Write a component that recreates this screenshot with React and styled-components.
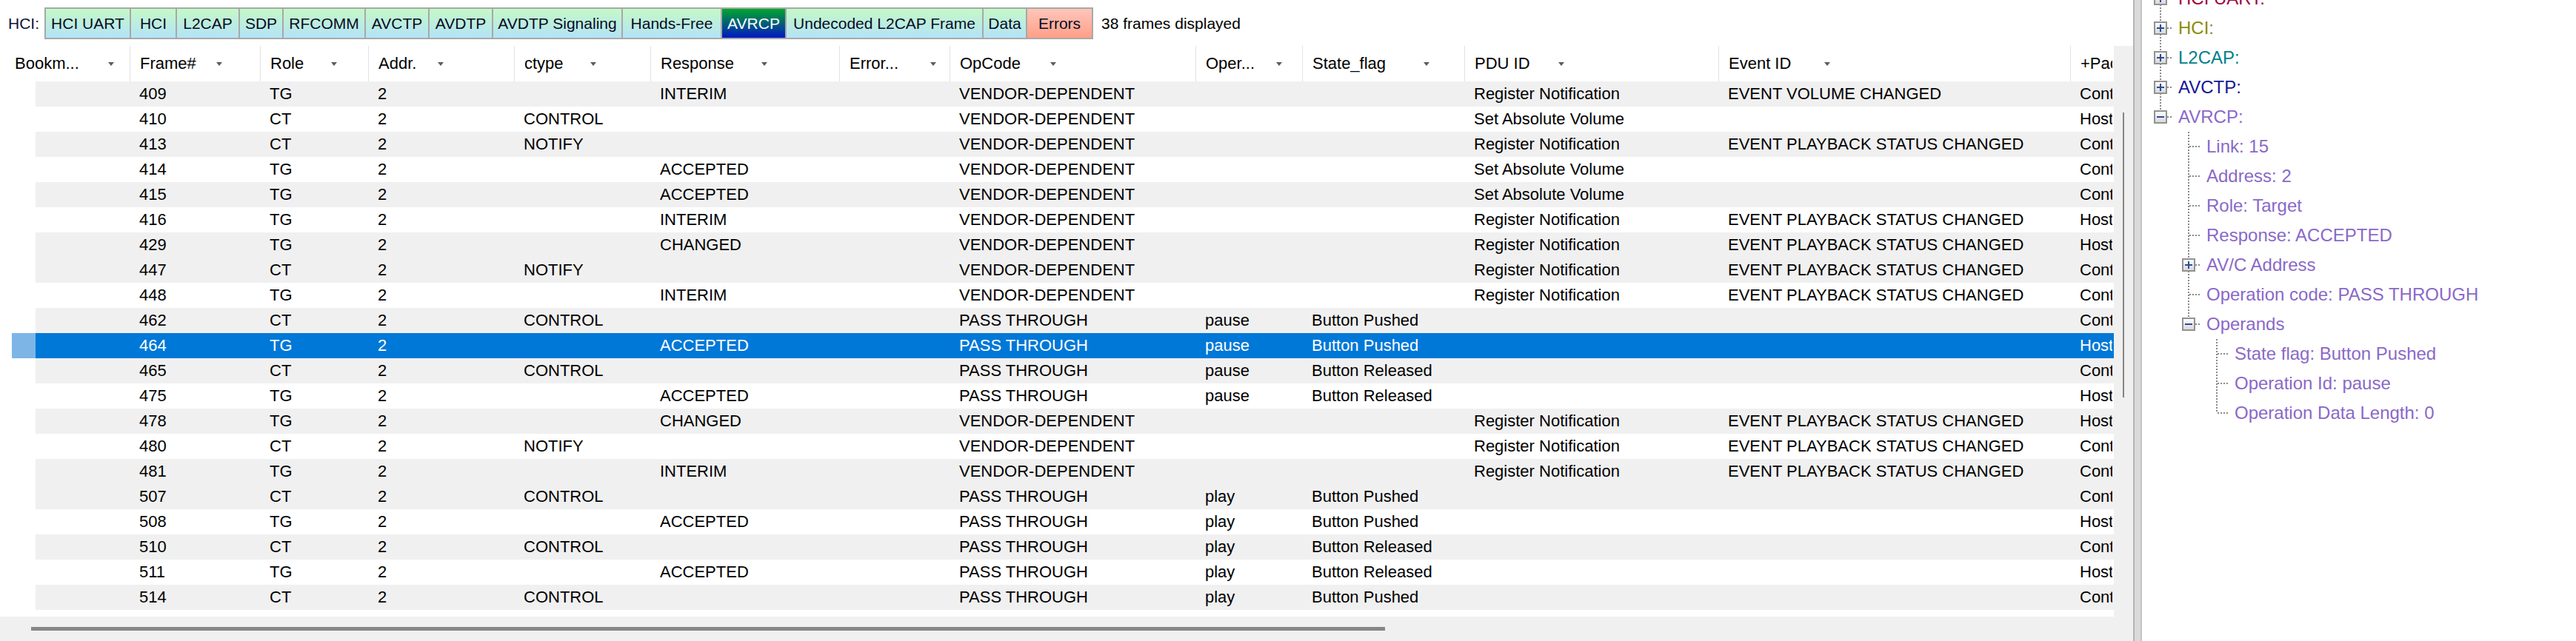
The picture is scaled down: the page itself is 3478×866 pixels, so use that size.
import React from 'react';
import styled, { createGlobalStyle } from 'styled-components';

const GlobalStyle = createGlobalStyle`
  html, body {
    margin: 0;
    padding: 0;
    background: #fff;
  }
  body {
    width: 3478px;
    height: 866px;
    overflow: hidden;
    font-family: "Liberation Sans", Arial, sans-serif;
  }
`;

const TABS = [
  { label: 'HCI UART', width: 115 },
  { label: 'HCI', width: 62 },
  { label: 'L2CAP', width: 85 },
  { label: 'SDP', width: 59 },
  { label: 'RFCOMM', width: 111 },
  { label: 'AVCTP', width: 86 },
  { label: 'AVDTP', width: 86 },
  { label: 'AVDTP Signaling', width: 175 },
  { label: 'Hands-Free', width: 134 },
  { label: 'AVRCP', width: 87, kind: 'active' },
  { label: 'Undecoded L2CAP Frame', width: 266 },
  { label: 'Data', width: 59 },
  { label: 'Errors', width: 89, kind: 'error' },
];

const COLUMNS = [
  { key: 'bookmark', title: 'Bookm...', width: 175, arrowAt: 146 },
  { key: 'frame', title: 'Frame#', width: 176, arrowAt: 116 },
  { key: 'role', title: 'Role', width: 146, arrowAt: 95 },
  { key: 'addr', title: 'Addr.', width: 197, arrowAt: 93 },
  { key: 'ctype', title: 'ctype', width: 184, arrowAt: 102 },
  { key: 'resp', title: 'Response', width: 255, arrowAt: 149 },
  { key: 'err', title: 'Error...', width: 149, arrowAt: 122 },
  { key: 'op', title: 'OpCode', width: 332, arrowAt: 135 },
  { key: 'oper', title: 'Oper...', width: 144, arrowAt: 108 },
  { key: 'state', title: 'State_flag', width: 219, arrowAt: 163 },
  { key: 'pdu', title: 'PDU ID', width: 343, arrowAt: 126 },
  { key: 'event', title: 'Event ID', width: 475, arrowAt: 142 },
  { key: 'dir', title: '+Pac', width: 57 },
];

const GUTTER = 48;

const VD = 'VENDOR-DEPENDENT';
const PT = 'PASS THROUGH';
const RN = 'Register Notification';
const SAV = 'Set Absolute Volume';
const EPS = 'EVENT PLAYBACK STATUS CHANGED';

// the last column is clipped by the grid edge, as in the capture
const FRAMES = [
  { frame: 409, role: 'TG', resp: 'INTERIM', op: VD, pdu: RN, event: 'EVENT VOLUME CHANGED', dir: 'Cont', shaded: true },
  { frame: 410, role: 'CT', ctype: 'CONTROL', op: VD, pdu: SAV, dir: 'Host' },
  { frame: 413, role: 'CT', ctype: 'NOTIFY', op: VD, pdu: RN, event: EPS, dir: 'Cont', shaded: true },
  { frame: 414, role: 'TG', resp: 'ACCEPTED', op: VD, pdu: SAV, dir: 'Cont' },
  { frame: 415, role: 'TG', resp: 'ACCEPTED', op: VD, pdu: SAV, dir: 'Cont', shaded: true },
  { frame: 416, role: 'TG', resp: 'INTERIM', op: VD, pdu: RN, event: EPS, dir: 'Host' },
  { frame: 429, role: 'TG', resp: 'CHANGED', op: VD, pdu: RN, event: EPS, dir: 'Host', shaded: true },
  { frame: 447, role: 'CT', ctype: 'NOTIFY', op: VD, pdu: RN, event: EPS, dir: 'Cont', shaded: true },
  { frame: 448, role: 'TG', resp: 'INTERIM', op: VD, pdu: RN, event: EPS, dir: 'Cont' },
  { frame: 462, role: 'CT', ctype: 'CONTROL', op: PT, oper: 'pause', state: 'Button Pushed', dir: 'Cont', shaded: true },
  { frame: 464, role: 'TG', resp: 'ACCEPTED', op: PT, oper: 'pause', state: 'Button Pushed', dir: 'Host', selected: true },
  { frame: 465, role: 'CT', ctype: 'CONTROL', op: PT, oper: 'pause', state: 'Button Released', dir: 'Cont', shaded: true },
  { frame: 475, role: 'TG', resp: 'ACCEPTED', op: PT, oper: 'pause', state: 'Button Released', dir: 'Host' },
  { frame: 478, role: 'TG', resp: 'CHANGED', op: VD, pdu: RN, event: EPS, dir: 'Host', shaded: true },
  { frame: 480, role: 'CT', ctype: 'NOTIFY', op: VD, pdu: RN, event: EPS, dir: 'Cont' },
  { frame: 481, role: 'TG', resp: 'INTERIM', op: VD, pdu: RN, event: EPS, dir: 'Cont', shaded: true },
  { frame: 507, role: 'CT', ctype: 'CONTROL', op: PT, oper: 'play', state: 'Button Pushed', dir: 'Cont', shaded: true },
  { frame: 508, role: 'TG', resp: 'ACCEPTED', op: PT, oper: 'play', state: 'Button Pushed', dir: 'Host' },
  { frame: 510, role: 'CT', ctype: 'CONTROL', op: PT, oper: 'play', state: 'Button Released', dir: 'Cont', shaded: true },
  { frame: 511, role: 'TG', resp: 'ACCEPTED', op: PT, oper: 'play', state: 'Button Released', dir: 'Host' },
  { frame: 514, role: 'CT', ctype: 'CONTROL', op: PT, oper: 'play', state: 'Button Pushed', dir: 'Cont', shaded: true },
];

const PURPLE = '#8a68c8';

const TREE = [
  { text: 'HCI UART:', color: '#a0003c', guides: ['tee'], box: 'plus' },
  { text: 'HCI:', color: '#8c8c00', guides: ['tee'], box: 'plus' },
  { text: 'L2CAP:', color: '#00808c', guides: ['tee'], box: 'plus' },
  { text: 'AVCTP:', color: '#161696', guides: ['tee'], box: 'plus' },
  { text: 'AVRCP:', color: PURPLE, guides: ['elbow'], box: 'minus' },
  { text: 'Link: 15', guides: ['none', 'tee'] },
  { text: 'Address: 2', guides: ['none', 'tee'] },
  { text: 'Role: Target', guides: ['none', 'tee'] },
  { text: 'Response: ACCEPTED', guides: ['none', 'tee'] },
  { text: 'AV/C Address', guides: ['none', 'tee'], box: 'plus' },
  { text: 'Operation code: PASS THROUGH', guides: ['none', 'tee'] },
  { text: 'Operands', guides: ['none', 'elbow'], box: 'minus' },
  { text: 'State flag: Button Pushed', guides: ['none', 'none', 'tee'] },
  { text: 'Operation Id: pause', guides: ['none', 'none', 'tee'] },
  { text: 'Operation Data Length: 0', guides: ['none', 'none', 'elbow'] },
];

const Connector = ({ kind, box }) => (
  <svg width="38" height="40" viewBox="0 0 38 40">
    <defs>
      <linearGradient id="tvbox" x1="0" y1="0" x2="0" y2="1">
        <stop offset="0" stopColor="#ffffff" />
        <stop offset="1" stopColor="#d6d6d6" />
      </linearGradient>
    </defs>
    {kind !== 'none' && (
      <line x1="19" y1="0" x2="19" y2={kind === 'elbow' ? 20 : 40}
        stroke="#8a8a8a" strokeWidth="2" strokeDasharray="2 2" />
    )}
    {(kind === 'tee' || kind === 'elbow') && (
      <line x1="20" y1="20" x2="34" y2="20" stroke="#8a8a8a" strokeWidth="2" strokeDasharray="2 2" />
    )}
    {box && (
      <g>
        <rect x="11" y="12" width="16" height="16" fill="url(#tvbox)" stroke="#929292" strokeWidth="2" />
        <line x1="14" y1="20" x2="24" y2="20" stroke="#2c4c9c" strokeWidth="2" />
        {box === 'plus' && <line x1="19" y1="15" x2="19" y2="25" stroke="#2c4c9c" strokeWidth="2" />}
      </g>
    )}
  </svg>
);

const App = () => {
  return (
    <Screen>
      <GlobalStyle />
      <LeftPane>
        <Toolbar>
          <FilterLabel>HCI:</FilterLabel>
          <TabStrip>
            {TABS.map((t) => (
              <Tab key={t.label} $w={t.width} $kind={t.kind}>{t.label}</Tab>
            ))}
          </TabStrip>
          <FrameCount>38 frames displayed</FrameCount>
        </Toolbar>

        <TableArea>
          <Table>
            <HeaderRow>
              {COLUMNS.map((c, i) => (
                <HeadCell key={c.key} $w={c.width} $first={i === 0}>
                  {c.arrowAt ? (
                    <>
                      <HeadLabel $w={c.arrowAt - (i === 0 ? 20 : 13)}>{c.title}</HeadLabel>
                      <SortArrow />
                    </>
                  ) : (
                    c.title
                  )}
                </HeadCell>
              ))}
            </HeaderRow>
            {FRAMES.map((f) => (
              <RowLine key={f.frame}>
                <Gutter>{f.selected && <RowMarker />}</Gutter>
                <RowBody $selected={f.selected} $shaded={f.shaded}>
                  {COLUMNS.map((c, i) => (
                    <Cell key={c.key} $w={i === 0 ? c.width - GUTTER : c.width}>
                      {c.key === 'addr' ? '2' : f[c.key] || ''}
                    </Cell>
                  ))}
                </RowBody>
              </RowLine>
            ))}
          </Table>
          <VScroll>
            <VThumb />
          </VScroll>
        </TableArea>

        <HScroll>
          <HThumb />
        </HScroll>
      </LeftPane>

      <Splitter />

      <DetailPane>
        <Tree>
          {TREE.map((n) => (
            <TreeRow key={n.text}>
              {n.guides.map((g, i) => (
                <Connector key={i} kind={g} box={i === n.guides.length - 1 ? n.box : null} />
              ))}
              <TreeText $color={n.color || PURPLE}>{n.text}</TreeText>
            </TreeRow>
          ))}
        </Tree>
      </DetailPane>
    </Screen>
  );
};

export default App;

const Screen = styled.div`
  display: flex;
  width: 3478px;
  height: 866px;
  overflow: hidden;
  background: #fff;
`;

const LeftPane = styled.div`
  flex: 0 0 2880px;
  display: flex;
  flex-direction: column;
  background: #fff;
`;

const Toolbar = styled.div`
  height: 62px;
  box-sizing: border-box;
  padding: 10px 0 0 11px;
  display: flex;
  align-items: flex-start;
  font-size: 21px;
`;

const FilterLabel = styled.span`
  width: 49px;
  line-height: 43px;
  color: #10103a;
`;

const TabStrip = styled.div`
  display: flex;
  height: 43px;
  box-sizing: border-box;
  border: 2px solid #a8a8a8;
  border-right: none;
`;

const Tab = styled.div`
  width: ${(p) => p.$w}px;
  box-sizing: border-box;
  border-right: 2px solid #a8a8a8;
  display: flex;
  align-items: center;
  justify-content: center;
  white-space: nowrap;
  overflow: hidden;
  color: ${(p) => (p.$kind === 'active' ? '#fff' : '#0a0a24')};
  background: ${(p) =>
    p.$kind === 'active'
      ? 'linear-gradient(#00a82a, #0016c4)'
      : p.$kind === 'error'
        ? 'linear-gradient(#ffc6ba, #ff9f88)'
        : 'linear-gradient(#c4f9c6, #b4e3f7)'};
`;

const FrameCount = styled.span`
  margin-left: 11px;
  line-height: 43px;
  color: #000;
`;

const TableArea = styled.div`
  flex: 1;
  display: flex;
  min-height: 0;
`;

const Table = styled.div`
  flex: 0 0 2854px;
  font-size: 22px;
  color: #000;
  overflow: hidden;
`;

const HeaderRow = styled.div`
  display: flex;
  height: 48px;
  background: #fff;
`;

const HeadCell = styled.div`
  flex: 0 0 ${(p) => p.$w}px;
  box-sizing: border-box;
  display: flex;
  align-items: center;
  padding-left: ${(p) => (p.$first ? 20 : 13)}px;
  border-left: ${(p) => (p.$first ? 'none' : '1px solid #e2e2e2')};
  white-space: nowrap;
  overflow: hidden;
`;

const HeadLabel = styled.span`
  flex: 0 0 ${(p) => p.$w}px;
  overflow: hidden;
`;

const SortArrow = styled.span`
  flex: none;
  width: 0;
  height: 0;
  border-left: 4px solid transparent;
  border-right: 4px solid transparent;
  border-top: 5px solid #5c5c5c;
`;

const RowLine = styled.div`
  display: flex;
  height: 34px;
`;

const Gutter = styled.div`
  flex: 0 0 ${GUTTER}px;
  box-sizing: border-box;
  padding-left: 16px;
`;

const RowMarker = styled.div`
  height: 34px;
  background: #7db5e7;
`;

const RowBody = styled.div`
  flex: 1;
  display: flex;
  align-items: center;
  background: ${(p) => (p.$selected ? '#0078d7' : p.$shaded ? '#f0f0f0' : '#fff')};
  color: ${(p) => (p.$selected ? '#fff' : '#000')};
`;

const Cell = styled.div`
  flex: 0 0 ${(p) => p.$w}px;
  box-sizing: border-box;
  padding-left: 13px;
  white-space: nowrap;
  overflow: hidden;
`;

const VScroll = styled.div`
  flex: 1;
  background: #f0f0f0;
  padding: 90px 0 0 12px;
  box-sizing: border-box;
`;

const VThumb = styled.div`
  width: 2px;
  height: 385px;
  background: #858585;
`;

const HScroll = styled.div`
  height: 33px;
  flex: none;
  background: #f0f0f0;
  padding: 14px 0 0 42px;
  box-sizing: border-box;
`;

const HThumb = styled.div`
  width: 1828px;
  height: 5px;
  background: #868686;
`;

const Splitter = styled.div`
  flex: 0 0 12px;
  box-sizing: border-box;
  background: #dadada;
  border-left: 2px solid #b5b5b5;
  border-right: 2px solid #c4c4c4;
`;

const DetailPane = styled.div`
  flex: 1;
  background: #fff;
  overflow: hidden;
  padding-left: 6px;
`;

const Tree = styled.div`
  margin-top: -22px;
`;

const TreeRow = styled.div`
  display: flex;
  align-items: center;
  height: 40px;
`;

const TreeText = styled.span`
  margin-left: 5px;
  font-size: 24px;
  line-height: 40px;
  white-space: nowrap;
  color: ${(p) => p.$color};
`;
